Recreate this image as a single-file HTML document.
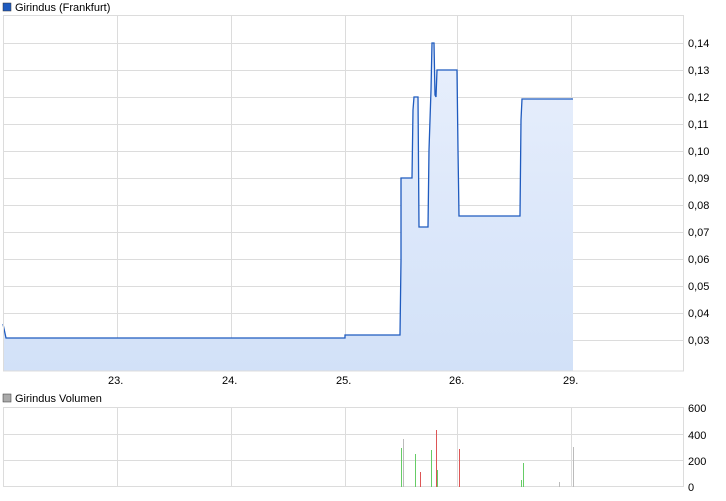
<!DOCTYPE html><html><head><style>body{margin:0;background:#fff;font-family:"Liberation Sans",sans-serif;}</style></head><body>
<svg width="726" height="496" xmlns="http://www.w3.org/2000/svg" font-family="Liberation Sans, sans-serif" font-size="11">
<rect x="3" y="3" width="8" height="8" fill="#1f5bbf" stroke="#333" stroke-width="0.5"/>
<text x="15" y="11">Girindus (Frankfurt)</text>
<g stroke="#dcdcdc" stroke-width="1">
<line x1="117.5" y1="15" x2="117.5" y2="371"/><line x1="231.5" y1="15" x2="231.5" y2="371"/><line x1="345.5" y1="15" x2="345.5" y2="371"/><line x1="457.5" y1="15" x2="457.5" y2="371"/><line x1="571.5" y1="15" x2="571.5" y2="371"/>
<line x1="3" y1="43.5" x2="684" y2="43.5"/><line x1="3" y1="70.5" x2="684" y2="70.5"/><line x1="3" y1="97.5" x2="684" y2="97.5"/><line x1="3" y1="124.5" x2="684" y2="124.5"/><line x1="3" y1="151.5" x2="684" y2="151.5"/><line x1="3" y1="178.5" x2="684" y2="178.5"/><line x1="3" y1="205.5" x2="684" y2="205.5"/><line x1="3" y1="232.5" x2="684" y2="232.5"/><line x1="3" y1="259.5" x2="684" y2="259.5"/><line x1="3" y1="286.5" x2="684" y2="286.5"/><line x1="3" y1="313.5" x2="684" y2="313.5"/><line x1="3" y1="340.5" x2="684" y2="340.5"/>
</g>
<defs><linearGradient id="g" x1="0" y1="0" x2="0" y2="1"><stop offset="0" stop-color="#e8effc"/><stop offset="1" stop-color="#d2e1f8"/></linearGradient></defs>
<path d="M3,324 L6,338 L345,338 L345,335 L400,335 L401,260 L401,178 L412,178 L413,110 L414,97 L418,97 L419,227 L428,227 L429,150 L431,90 L432,43 L434,43 L435,95 L436,97 L437,70 L457,70 L458,150 L459,216 L520,216 L521,120 L522,99 L573,99 L573,371 L3,371 Z" fill="url(#g)"/>
<path d="M3,324 L6,338 L345,338 L345,335 L400,335 L401,260 L401,178 L412,178 L413,110 L414,97 L418,97 L419,227 L428,227 L429,150 L431,90 L432,43 L434,43 L435,95 L436,97 L437,70 L457,70 L458,150 L459,216 L520,216 L521,120 L522,99 L573,99" fill="none" stroke="#1f5bbf" stroke-width="1.3"/>
<rect x="3.5" y="15.5" width="680" height="355.5" fill="none" stroke="#dcdcdc"/>
<g fill="#000" font-size="11">
<text x="688" y="47">0,14</text><text x="688" y="74">0,13</text><text x="688" y="101">0,12</text><text x="688" y="128">0,11</text><text x="688" y="155">0,10</text><text x="688" y="182">0,09</text><text x="688" y="209">0,08</text><text x="688" y="236">0,07</text><text x="688" y="263">0,06</text><text x="688" y="290">0,05</text><text x="688" y="317">0,04</text><text x="688" y="344">0,03</text>
<text x="108" y="384">23.</text><text x="222" y="384">24.</text><text x="336" y="384">25.</text><text x="449" y="384">26.</text><text x="563" y="384">29.</text>
</g>
<rect x="3" y="394" width="8" height="8" fill="#aaa" stroke="#333" stroke-width="0.5"/>
<text x="15" y="402">Girindus Volumen</text>
<g stroke="#dcdcdc"><line x1="3" y1="434.5" x2="684" y2="434.5"/><line x1="3" y1="460.5" x2="684" y2="460.5"/>
<line x1="117.5" y1="407" x2="117.5" y2="487"/><line x1="231.5" y1="407" x2="231.5" y2="487"/><line x1="345.5" y1="407" x2="345.5" y2="487"/><line x1="457.5" y1="407" x2="457.5" y2="487"/><line x1="571.5" y1="407" x2="571.5" y2="487"/>
<rect x="3.5" y="407.5" width="680" height="79" fill="none"/></g>
<g stroke-width="1">
<line x1="401.5" y1="448" x2="401.5" y2="487" stroke="#6c6"/><line x1="403.5" y1="439" x2="403.5" y2="487" stroke="#bbb"/>
<line x1="415.5" y1="454" x2="415.5" y2="487" stroke="#6c6"/><line x1="420.5" y1="472" x2="420.5" y2="487" stroke="#d55"/>
<line x1="431.5" y1="450" x2="431.5" y2="487" stroke="#6c6"/><line x1="436.5" y1="430" x2="436.5" y2="487" stroke="#d55"/><line x1="437.5" y1="470" x2="437.5" y2="487" stroke="#6c6"/>
<line x1="459.5" y1="449" x2="459.5" y2="487" stroke="#d55"/>
<line x1="521.5" y1="480" x2="521.5" y2="487" stroke="#6c6"/><line x1="523.5" y1="463" x2="523.5" y2="487" stroke="#6c6"/>
<line x1="559.5" y1="482" x2="559.5" y2="487" stroke="#bbb"/><line x1="573.5" y1="447" x2="573.5" y2="487" stroke="#bbb"/>
</g>
<g font-size="11"><text x="688" y="412">600</text><text x="688" y="439">400</text><text x="688" y="465">200</text><text x="688" y="491">0</text></g>
</svg></body></html>
